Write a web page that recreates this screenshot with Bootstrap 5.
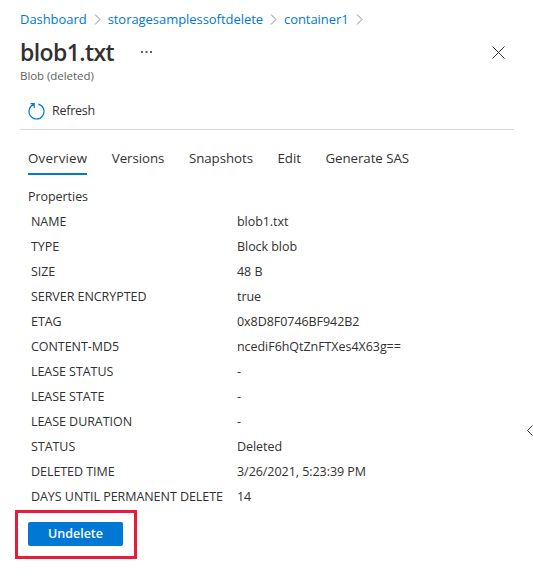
<!DOCTYPE html>
<html lang="en">

<head>
    <meta charset="UTF-8">
    <meta name="viewport" content="width=device-width, initial-scale=1.0">
    <title>blob1.txt</title>
    <link rel="stylesheet" href="https://cdn.jsdelivr.net/npm/bootstrap@5.3.0/dist/css/bootstrap.min.css">
    <style>
        html, body { height: 100%; }
        body {
            background: #fff;
            color: #323130;
            font-family: "Open Sans", "Noto Sans", sans-serif;
            font-size: 12.5px;
            letter-spacing: -0.05px;
            line-height: 18px;
            overflow: hidden;
        }
        .blade { padding: 10px 19px 0 20px; position: relative; height: 100%; }
        .crumbs { height: 18px; gap: 7px; font-size: 13px; }
        .crumbs a { color: #0078d4; text-decoration: none; }
        .blob-title { font-size: 23px; line-height: 32px; font-weight: 600; margin: 0; color: #323130; letter-spacing: -0.6px; }
        .title-row { margin-top: 8px; }
        .more-dots { margin-left: 27px; }
        .close-x { margin-right: 9px; }
        .blob-sub { font-size: 11.5px; line-height: 14px; color: #605e5c; margin-top: 1px; }
        .cmd-bar { height: 36px; margin-top: 10px; padding-left: 8px; gap: 7px; border-bottom: 1px solid #d6d6d6; box-sizing: content-box; }
        .cmd-bar span { letter-spacing: -0.25px; }
        .blade-tabs { margin-top: 19px; padding-left: 8px; gap: 24.5px; height: 26px; font-size: 13.3px; }
        .blade-tabs a { color: #323130; text-decoration: none; height: 26px; display: block; }
        .blade-tabs a.active { border-bottom: 2px solid #0078d4; letter-spacing: 0.2px; }
        .props { padding-left: 8px; margin-top: 13px; }
        .props-head { height: 18px; margin-bottom: 3px; }
        .prop-row { height: 25px; padding-left: 3px; align-items: center; }
        .prop-name { width: 206px; flex: none; white-space: nowrap; }
        .undelete-box { border: 3px solid #e81b3c; width: 122px; height: 49px; margin: 1px 0 0 -13px; padding: 9px 10px; }
        .btn-undelete { background: #0078d4; color: #fff; width: 95px; height: 24px; padding: 0; font-size: 12.5px; font-weight: 600; line-height: 24px; border: 0; border-radius: 2px; display: block; }
        .pane-toggle { position: absolute; right: 0; top: 425px; }
    </style>
</head>

<body>
    <div class="blade">
        <div class="crumbs d-flex align-items-center">
            <a href="#">Dashboard</a>
            <svg width="7" height="11" viewBox="0 0 7 11" fill="none" stroke="#8a8886"><path d="M1 .5l5 5-5 5"/></svg>
            <a href="#">storagesamplessoftdelete</a>
            <svg width="7" height="11" viewBox="0 0 7 11" fill="none" stroke="#8a8886"><path d="M1 .5l5 5-5 5"/></svg>
            <a href="#">container1</a>
            <svg width="7" height="11" viewBox="0 0 7 11" fill="none" stroke="#8a8886"><path d="M1 .5l5 5-5 5"/></svg>
        </div>

        <div class="title-row d-flex align-items-center">
            <h1 class="blob-title">blob1.txt</h1>
            <svg class="more-dots" width="11" height="2" viewBox="0 0 11 2" fill="#605e5c"><rect width="2" height="2"/><rect x="4.5" width="2" height="2"/><rect x="9" width="2" height="2"/></svg>
            <svg class="close-x ms-auto" width="13" height="13" viewBox="0 0 13 13" stroke="#323130" fill="none"><path d="M.5.5l12 12M12.5.5l-12 12"/></svg>
        </div>
        <div class="blob-sub">Blob (deleted)</div>

        <div class="cmd-bar d-flex align-items-center">
            <svg width="17" height="17" viewBox="0 0 17 17" fill="none" stroke="#0078d4" stroke-width="1.2"><path d="M10.3 1.2A7.5 7.5 0 1 1 6 1.4M2.5 .6H6.2V5"/></svg>
            <span>Refresh</span>
        </div>

        <nav class="blade-tabs d-flex">
            <a class="active" href="#">Overview</a>
            <a href="#">Versions</a>
            <a href="#">Snapshots</a>
            <a href="#">Edit</a>
            <a href="#">Generate SAS</a>
        </nav>

        <div class="props">
            <div class="props-head">Properties</div>
            <div class="prop-row d-flex"><div class="prop-name">NAME</div><div>blob1.txt</div></div>
            <div class="prop-row d-flex"><div class="prop-name">TYPE</div><div>Block blob</div></div>
            <div class="prop-row d-flex"><div class="prop-name">SIZE</div><div>48 B</div></div>
            <div class="prop-row d-flex"><div class="prop-name">SERVER ENCRYPTED</div><div>true</div></div>
            <div class="prop-row d-flex"><div class="prop-name">ETAG</div><div>0x8D8F0746BF942B2</div></div>
            <div class="prop-row d-flex"><div class="prop-name">CONTENT-MD5</div><div>ncediF6hQtZnFTXes4X63g==</div></div>
            <div class="prop-row d-flex"><div class="prop-name">LEASE STATUS</div><div>-</div></div>
            <div class="prop-row d-flex"><div class="prop-name">LEASE STATE</div><div>-</div></div>
            <div class="prop-row d-flex"><div class="prop-name">LEASE DURATION</div><div>-</div></div>
            <div class="prop-row d-flex"><div class="prop-name">STATUS</div><div>Deleted</div></div>
            <div class="prop-row d-flex"><div class="prop-name">DELETED TIME</div><div>3/26/2021, 5:23:39 PM</div></div>
            <div class="prop-row d-flex"><div class="prop-name">DAYS UNTIL PERMANENT DELETE</div><div>14</div></div>
            <div class="undelete-box">
                <button type="button" class="btn btn-undelete">Undelete</button>
            </div>
        </div>

        <svg class="pane-toggle" width="6" height="11" viewBox="0 0 6 11" fill="none" stroke="#323130"><path d="M5.5.5l-5 5 5 5"/></svg>
    </div>
</body>

</html>
